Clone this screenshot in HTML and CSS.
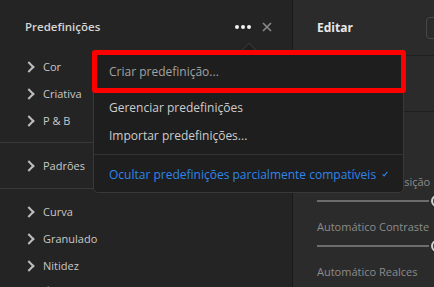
FILE: index.html
```html
<!DOCTYPE html>
<html lang="pt-BR">
<head>
    <meta charset="UTF-8">
    <meta name="viewport" content="width=device-width, initial-scale=1.0">
    <title>Predefinições</title>
    <link rel="stylesheet" href="styles.css">
</head>
<body>

<div class="app">
    <aside class="presets">
        <header class="panel-head">
            <h2 class="panel-title">Predefinições</h2>
            <div class="head-actions">
                <svg class="dots" width="16" height="4" viewBox="0 0 16 4"><circle cx="2" cy="2" r="2"/><circle cx="8" cy="2" r="2"/><circle cx="14" cy="2" r="2"/></svg>
                <svg class="close" width="10" height="10" viewBox="0 0 10 10"><path d="M1 1L9 9M9 1L1 9"/></svg>
            </div>
        </header>

        <ul class="group">
            <li class="group-item"><span class="chev"></span>Cor</li>
            <li class="group-item"><span class="chev"></span>Criativa</li>
            <li class="group-item"><span class="chev"></span>P &amp; B</li>
        </ul>
        <ul class="group">
            <li class="group-item"><span class="chev"></span>Padrões</li>
        </ul>
        <ul class="group">
            <li class="group-item"><span class="chev"></span>Curva</li>
            <li class="group-item"><span class="chev"></span>Granulado</li>
            <li class="group-item"><span class="chev"></span>Nitidez</li>
            <li class="group-item"><span class="chev"></span>Ótica</li>
        </ul>
    </aside>

    <main class="edit">
        <header class="edit-head">
            <h2 class="edit-title">Editar</h2>
            <div class="mode-box"></div>
        </header>
        <div class="edit-tabs"></div>
        <div class="sliders">
            <div class="slider">
                <div class="slider-label">Automático Exposição</div>
                <div class="track"><span class="track-line"></span><span class="knob"></span></div>
            </div>
            <div class="slider">
                <div class="slider-label">Automático Contraste</div>
                <div class="track"><span class="track-line"></span><span class="knob"></span></div>
            </div>
            <div class="slider">
                <div class="slider-label">Automático Realces</div>
            </div>
        </div>
    </main>

    <div class="menu">
        <span class="menu-caret"></span>
        <div class="menu-item is-muted">Criar predefinição...</div>
        <div class="menu-sep"></div>
        <div class="menu-item">Gerenciar predefinições</div>
        <div class="menu-item">Importar predefinições...</div>
        <div class="menu-sep wide"></div>
        <div class="menu-item is-active">
            Ocultar predefinições parcialmente compatíveis
            <svg class="check" width="11" height="10" viewBox="0 0 11 10"><path d="M1 5.5L4 8.5L10 1"/></svg>
        </div>
    </div>

    <div class="highlight"></div>
</div>

</body>
</html>
```

FILE: styles.css
```css
body {
    margin: 0;
    padding: 0;
    background-color: #2b2b2b;
    font-family: "Open Sans", "Noto Sans", sans-serif;
    overflow: hidden;
}
.app {
    position: relative;
    display: flex;
    width: 434px;
    height: 287px;
    overflow: hidden;
}
.presets {
    width: 292px;
    flex-shrink: 0;
    background-color: #242424;
    border-right: 1px solid #1a1a1a;
}
.panel-head {
    height: 53px;
    display: flex;
    align-items: center;
    justify-content: space-between;
    padding: 0 20px 0 25px;
}
.panel-title {
    margin: 0;
    font-size: 11.5px;
    font-weight: 600;
    color: #d6d6d6;
}
.head-actions {
    display: flex;
    align-items: center;
    gap: 11px;
}
.dots {
    fill: #f2f2f2;
}
.close {
    stroke: #8a8a8a;
    stroke-width: 1.6;
    fill: none;
}
.group {
    list-style: none;
    margin: 0;
    padding: 9px 0;
    border-bottom: 1px solid #393939;
}
.group:first-of-type {
    padding-top: 0;
    padding-bottom: 8px;
}
.group:last-of-type {
    border-bottom: none;
}
.group-item {
    height: 27px;
    display: flex;
    align-items: center;
    padding-left: 26px;
    font-size: 11px;
    color: #c8c8c8;
}
.chev {
    width: 6px;
    height: 6px;
    border-right: 2px solid #bdbdbd;
    border-top: 2px solid #bdbdbd;
    transform: rotate(45deg);
    margin: 0 10px 0 -1px;
}
.edit {
    flex: 1;
    min-width: 0;
    overflow: hidden;
}
.edit-head {
    height: 55px;
    display: flex;
    align-items: center;
    padding-left: 24px;
    border-bottom: 1px solid #1f1f1f;
}
.edit-title {
    margin: 0;
    font-size: 12px;
    font-weight: 700;
    color: #e8e8e8;
}
.mode-box {
    width: 40px;
    height: 20px;
    margin-left: 73px;
    flex-shrink: 0;
    border: 1px solid #474747;
    border-radius: 4px;
}
.edit-tabs {
    height: 55px;
    border-bottom: 1px solid #1f1f1f;
}
.sliders {
    padding: 60px 0 0 24px;
}
.slider {
    margin-bottom: 7px;
}
.slider-label {
    height: 20px;
    line-height: 20px;
    font-size: 11px;
    color: #8c8c8c;
    white-space: nowrap;
}
.track {
    height: 18px;
    display: flex;
    align-items: center;
    gap: 2px;
    width: 140px;
}
.track-line {
    width: 112px;
    height: 2px;
    background-color: #6c6c6c;
}
.knob {
    width: 8px;
    height: 8px;
    flex-shrink: 0;
    border: 2px solid #cfcfcf;
    border-radius: 50%;
    background-color: #3a3a3a;
}
.menu {
    position: absolute;
    left: 93px;
    top: 51px;
    width: 309px;
    padding: 5px 0 4px;
    background-color: #1e1e1e;
    border: 1px solid #383838;
    border-radius: 5px;
}
.menu-caret {
    position: absolute;
    left: 149px;
    top: -7px;
    width: 11px;
    height: 11px;
    background-color: #1e1e1e;
    border-left: 1px solid #383838;
    border-top: 1px solid #383838;
    transform: rotate(45deg);
}
.menu-item {
    position: relative;
    height: 28px;
    display: flex;
    align-items: center;
    gap: 6px;
    padding: 0 15px;
    font-size: 12px;
    color: #cdcdcd;
    white-space: nowrap;
}
.menu-item.is-muted {
    color: #a2a2a2;
}
.menu-item.is-active {
    color: #2f85ea;
}
.check {
    stroke: #2f85ea;
    stroke-width: 2;
    fill: none;
}
.menu-sep {
    height: 1px;
    margin: 4px 0 3px;
    background-color: #333;
}
.menu-sep.wide {
    margin: 5px 0;
}
.highlight {
    position: absolute;
    left: 92px;
    top: 50px;
    width: 314px;
    height: 43px;
    box-sizing: border-box;
    border: 5px solid #ff0000;
    border-radius: 3px;
}
```
